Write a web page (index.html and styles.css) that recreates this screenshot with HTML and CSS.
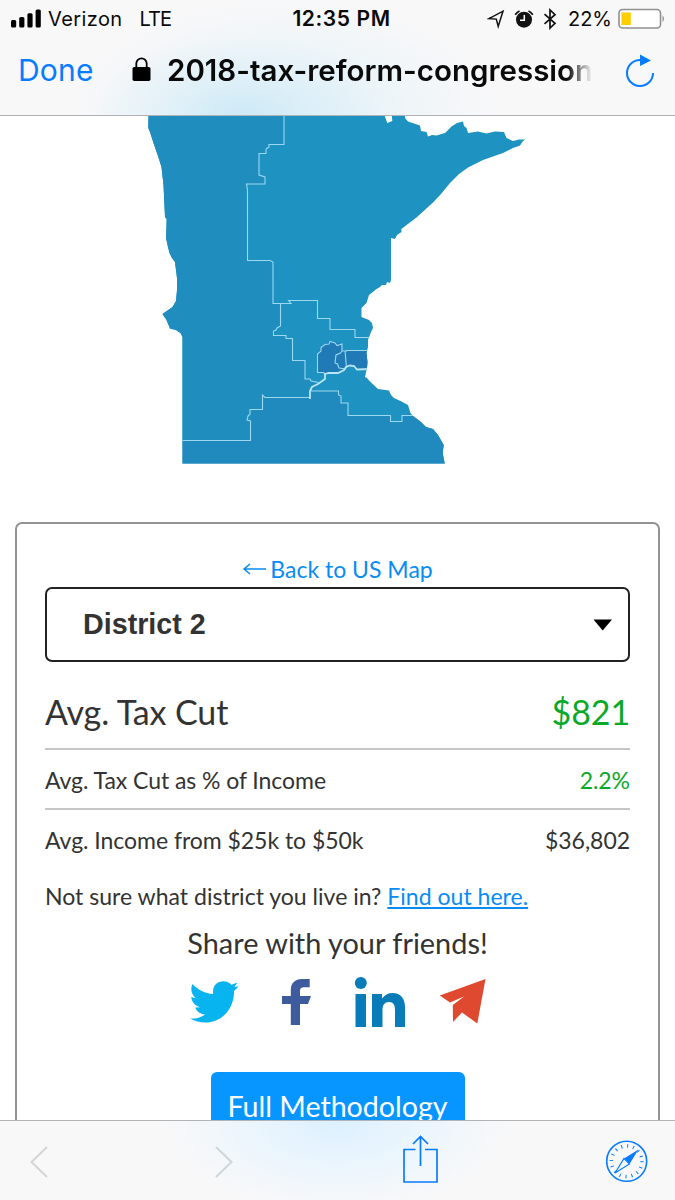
FILE: index.html
```
<!DOCTYPE html>
<html lang="en">
<head>
<meta charset="utf-8">
<title>2018 Tax Reform</title>
<link rel="stylesheet" href="styles.css">
</head>
<body>
<div class="phone">
  <header class="topbar">
    <div class="status">
      <div class="status-left">
        <svg class="signal" width="31" height="19" viewBox="0 0 31 19"><rect x="0" y="11" width="5.2" height="7.5" rx="1.5"/><rect x="8.2" y="8" width="5.2" height="10.5" rx="1.5"/><rect x="16.4" y="4.2" width="5.2" height="14.3" rx="1.5"/><rect x="24.6" y="0.5" width="5.2" height="18" rx="1.5"/></svg>
        <span class="carrier">Verizon</span><span class="network">LTE</span>
      </div>
      <div class="clock">12:35 PM</div>
      <div class="status-right">
        <svg width="18" height="20" viewBox="0 0 18 20"><path d="M2 9.6 16 2.2 11.2 17.4 9.3 10.1Z" fill="none" stroke="#111" stroke-width="1.5"/></svg>
        <svg class="alarm" width="20" height="20" viewBox="0 0 20 20"><circle cx="10" cy="10.7" r="8" fill="#111"/><path d="M1.2 5.7A11 11 0 0 1 5.5 2M18.8 5.7A11 11 0 0 0 14.500 2" fill="none" stroke="#111" stroke-width="1.8"/><path d="M10.300 6v5.200H6" fill="none" stroke="#fff" stroke-width="1.5"/></svg>
        <svg class="bluetooth" width="14" height="22" viewBox="0 0 14 22"><path d="M1.500 6.200 12 15.300 7 20V2l5 4.700L1.500 15.800" fill="none" stroke="#111" stroke-width="1.7"/></svg>
        <span class="percent">22%</span>
        <svg class="battery" width="48" height="22" viewBox="0 0 48 22"><rect x="1" y="1.500" width="41.500" height="18.500" rx="3.500" fill="#fff" stroke="#909092" stroke-width="1.600"/><rect x="3.500" y="4.500" width="9.300" height="12.500" fill="#fc0"/><path d="M44.500 7.300q3 3.500 0 7z" fill="#909092"/></svg>
      </div>
    </div>
    <div class="addressbar">
      <span class="done">Done</span>
      <svg class="lock" width="20" height="26" viewBox="0 0 20 26"><path d="M4.300 12V7.500a5.200 5.200 0 0 1 10.400 0V12" fill="none" stroke="#000" stroke-width="1.800"/><rect x="0.500" y="11" width="18" height="14" rx="1.800"/></svg>
      <span class="address">2018-tax-reform-congression</span>
      <svg class="reload" width="30" height="34" viewBox="0 0 30 34"><path d="M15.500 6A13 13 0 1 0 28 19" fill="none" stroke="#087cff" stroke-width="2"/><path d="M15 0.500 26 6.500 15 12Z" fill="#087cff"/></svg>
    </div>
  </header>

  <main class="page">
    <svg class="map" width="675" height="406" viewBox="0 116 675 406">
      <defs>
        <clipPath id="state"><path d="M148.500 114 148.300 128 150 132 153.500 143 158 156 161.500 167 163.500 185 165 217 166.700 219 166 238 168 247 169.500 253 172 258 175 262 177 278 177 290 176 301 172.500 307 162.500 314 166.500 320 170 328.500 176 330 180.500 333 182.500 337V463.500H444.700L442.700 453 443.700 445 438 435 433 429 426 427 421 422 413 416 410.500 413 408 405 401.500 401.500 394 398 391 395 389 390.500 378 389 370 381.500 367 378 365 377 367 368 367.500 362 366.500 353 368 347 368 340 371 332 373 328 372 323 369 320 361.500 317 361.500 308 366.500 303 369 295 376.500 289 380 287 382 285 386 285 387 282 390 283 391 280V238L395 239 397 235 401.500 232 401.300 229 416.500 217.500 433 202.500 441 194 450 183 459 174 468 167.500 483 160 503 153 513 148 520 145.500 523 141 525.500 139.500 519 139.500 513 141 506.500 138 504 132 495 131.500 486.500 133.500 478 131.500 468 133 466.500 128 464 126 463 121.500 457 123 451.500 126.500 445 133 436.500 135.500 432 135 428 136.500 426.500 132 421 131 420 125.500 408 121.500 405 118 405 114H391.700L392.300 121 387.300 123 384 114Z"/></clipPath>
      </defs>
      <g clip-path="url(#state)">
        <rect x="140" y="110" width="400" height="360" fill="#1e92c1"/>
        <path fill="#1f8dbe" d="M140 110H284V145H269L265 154H259V175L265 177V184H246L248 260H272L273 303H280L280 326L273 335L286 338L293 342V360H305V379L319 384L310 397H265L262 409L250 413V440H140Z"/>
        <path fill="#2089bd" d="M140 440H251V413L262 409L265 397H310V391H339L341 400L348 404V415H390V421H402V416H460V470H140Z"/>
        <path fill="#207ab6" d="M317.500 372.500V354L320 350 324 345 330 341 341 344V350H372V369H357L350 365 344 370 336 373 326 373Z"/>
        <g class="borders">
          <path d="M284 110.500V144.500H269V147L266 149V153.500H259V175L265 177V184H246.500L247.500 190V260.500H270L273 262V303.500H291L288.500 300.500H317.500V318.500H330V329.500H355V337.500H372"/>
          <path d="M280.500 303.500V326L277 328 276 330 273.500 331V335.500H286V338.500H292.500V360.500H305V379H310L311 381 318.500 382.500"/>
          <path d="M182 440.500H250.500V421L247 420 248 416 250 414V409.500H262.500V395L265 397.500H310"/>
          <path d="M310 391H338.500V395L341 396V403H348V415.500H390.500V421.500H402V415.500H415"/>
          <path d="M325 374 323.500 372.500H317.500V354L321 351V347.500L325 344.500 329 344 330 341.500 335 343 337 345.500 342 344V351H347M342 351 340.500 353 336 355 335 363 337.500 364 339 368 346 369M345 350.500 346.500 368"/>
          <path d="M346 350.500H372"/>
          <path class="river" d="M310 399V391L312 387 318 384 325 379V374L329 373 338 373 344 370 346 367 350 365.500 354 366 357 369.500 370 369"/>
        </g>
      </g>
    </svg>

    <section class="card">
      <a class="back"><svg width="24" height="16" viewBox="0 0 24 16"><path d="M24 8H2M8 3 2 8l6 5" fill="none" stroke="currentColor" stroke-width="1.500"/></svg><span>Back to US Map</span></a>
      <div class="select"><span>District 2</span><svg width="20" height="12" viewBox="0 0 20 12"><path d="M0.500 0.500H19L9.700 11.500Z"/></svg></div>
      <div class="row row-large"><span>Avg. Tax Cut</span><span class="green">$821</span></div>
      <div class="row row-share"><span>Avg. Tax Cut as % of Income</span><span class="green">2.2%</span></div>
      <div class="row row-last"><span>Avg. Income from $25k to $50k</span><span>$36,802</span></div>
      <p class="lookup">Not sure what district you live in? <a>Find out here.</a></p>
      <p class="share-title">Share with your friends!</p>
      <div class="social">
        <svg width="50" height="60" viewBox="190 970 50 60"><path fill="#08b4f0" d="M190.300 1018.500C196 1019 201 1017.500 205 1014.500 200 1014 196.500 1011.500 195.300 1007.500L200 1007.300C194.500 1005.500 191.500 1001.500 191.300 997L195.800 998.200C191.500 995 190 989 192.500 984 198 990 205 993.500 213.200 994 212 986 217 981.200 223.500 981.200 227 981.200 229 982.500 231.500 984.700L237.500 982.500 234.300 987 238.800 986.200 234 991C234.500 1008 222.500 1022.500 205.500 1022.500 200 1022.500 194.500 1021 190.300 1018.500Z"/></svg>
        <svg width="30" height="60" viewBox="282 970 30 60"><path fill="#3d5b9d" d="M290.800 1025V1004H282V996H290.800V990C290.800 983 295 979 302 979H309.700V987.300H304C301 987.300 300 988.500 300 991V996H311L308 1004H300V1025Z"/></svg>
        <svg width="52" height="60" viewBox="354 970 52 60"><g fill="#087cb9"><circle cx="360.800" cy="983" r="6"/><path d="M355.500 994H366V1027H355.500ZM372 994H382V998.500C384.500 995 388 993 392.500 993 401 993 405 999 405 1007V1027H395V1010C395 1005 393.500 1002 389 1002 384.500 1002 382.500 1005 382.500 1010V1027H372Z"/></g></svg>
        <svg width="47" height="60" viewBox="439 970 47 60"><path fill="#df4930" d="M439.800 995.500 485.500 979 477.300 1023.500 462 1012.500 453 1022 452.800 1005 464 996.500 450 1002.500Z"/></svg>
      </div>
      <a class="method">Full Methodology</a>
    </section>
  </main>

  <footer class="toolbar">
    <svg width="18" height="34" viewBox="30 1145 18 34"><path d="M47 1147 31.500 1162 47 1177" fill="none" stroke="#d3d5d7" stroke-width="2"/></svg>
    <svg width="18" height="34" viewBox="215 1145 18 34"><path d="M216 1147 231.500 1162 216 1177" fill="none" stroke="#cfd6db" stroke-width="2"/></svg>
    <svg class="share" width="36" height="48" viewBox="402 1134 36 48"><path d="M415.500 1148.500H404V1181H437V1148.500H425M420.500 1165V1136M413 1143 420.500 1135.500 428 1143" fill="none" stroke="#087cff" stroke-width="1.700"/></svg>
    <svg width="42" height="44" viewBox="606 1140 42 44"><g fill="none" stroke="#087cff"><circle cx="626.700" cy="1161.300" r="20" stroke-width="1.600"/><circle cx="626.700" cy="1161.300" r="15.300" stroke-width="3.500" stroke-dasharray="1 5.009"/></g><path fill="#087cff" d="M638.500 1149.500 629.500 1164 624 1158.500Z"/><path fill="#f7f8f9" stroke="#087cff" stroke-width="1.200" d="M615 1173 624 1158.500 629.500 1164Z"/></svg>
  </footer>
</div>
</body>
</html>
```

FILE: styles.css
```
* { box-sizing: border-box; }
body { margin: 0; background: #fff; }
svg { display: block; flex: none; }
.phone { width: 675px; height: 1200px; display: flex; flex-direction: column; overflow: hidden; font-family: Lato, sans-serif; color: #333; }
.topbar { flex: none; height: 116px; border-bottom: 1px solid #b0b2b5; font-family: Inter, sans-serif; color: #0a0a0a;
  background: radial-gradient(ellipse 150px 80px at 240px 116px, rgba(200,232,246,.85) 0%, rgba(212,236,247,.5) 45%, rgba(247,248,249,0) 100%), radial-gradient(ellipse 210px 110px at 285px 110px, #e2f1f8 0%, rgba(247,248,249,0) 100%), #f8f8f9; }
.status { display: grid; grid-template-columns: 1fr auto 1fr; align-items: center; height: 37px; padding: 0 9px 0 11px; font-size: 20px; }
.status-left, .status-right { display: flex; align-items: center; }
.status-right { justify-content: flex-end; }
.carrier { margin-left: 6px; letter-spacing: .4px; }
.network { margin-left: 17px; letter-spacing: -.9px; }
.clock { font-weight: 600; font-size: 21px; letter-spacing: .6px; padding-left: 6px; }
.alarm { margin-left: 9px; }
.bluetooth { margin-left: 9px; }
.percent { margin-left: 11px; }
.battery { margin-left: 6px; }
.addressbar { display: flex; align-items: center; height: 67px; padding-left: 18px; }
.done { width: 114px; color: #087cff; font-size: 30px; letter-spacing: .2px; margin-top: -1px; }
.lock { margin-top: -4px; }
.address { margin-top: -2px; margin-left: 15px; width: 425px; white-space: nowrap; overflow: hidden; font-size: 29.5px; font-weight: 600; -webkit-mask-image: linear-gradient(90deg, #000 400px, transparent 425px); mask-image: linear-gradient(90deg, #000 400px, transparent 425px); }
.reload { margin-left: 33px; }
.page { flex: 1; min-height: 0; overflow: hidden; }
.borders path { fill: none; stroke: #9cd8f2; stroke-width: 1.1; }
.borders .river { stroke: #b9e6f7; stroke-width: 1.8; }
.card { margin: 0 15px; height: 700px; border: 2px solid #929292; border-radius: 7px; padding: 31px 28px 0; display: flex; flex-direction: column; }
.back { display: flex; align-items: center; justify-content: center; gap: 4px; height: 32px; padding-bottom: 5px; color: #078cf5; font-size: 23px; }
.select { display: flex; align-items: center; justify-content: space-between; height: 75px; border: 2px solid #222; border-radius: 7px; padding: 0 15px 0 36px; font: bold 28.7px "Liberation Sans", sans-serif; }
.row { display: flex; align-items: center; justify-content: space-between; height: 59px; font-size: 23px; border-bottom: 2px solid #c6c6c6; padding-top: 1px; }
.row-large { height: 88px; font-size: 34px; padding-top: 13px; letter-spacing: -.1px; }
.row-share { letter-spacing: -.06px; height: 60px; }
.row-last { border: 0; letter-spacing: -.04px; padding-top: 0; }
.green { color: #08a929; }
.lookup { margin: 0; height: 54px; padding-top: 13px; font-size: 23.05px; line-height: 29px; white-space: nowrap; }
.lookup a { color: #078cf5; text-decoration: underline; }
.share-title { margin: 0; height: 43px; text-align: center; font-size: 28.9px; line-height: 39px; }
.social { display: flex; height: 60px; margin-top: 4px; padding-left: 144.5px; }
.social svg + svg { margin-left: 42px; }
.social svg:nth-child(4) { margin-left: 33px; }
.method { align-self: center; flex: none; width: 254px; height: 70px; margin-top: 42px; border-radius: 6px; background: #0796ff; color: #fff; font-size: 28.6px; line-height: 69px; text-align: center; }
.toolbar { flex: none; height: 80px; border-top: 1px solid #b1b4b7; display: grid; grid-template-columns: 185px 187px 204px 42px; padding: 2px 0 0 30px; align-items: center;
  background: radial-gradient(ellipse 170px 90px at 337px 0, #dcf0ff 0%, rgba(228,244,255,.65) 50%, rgba(247,248,249,0) 100%), #f8f8f9; }
.share { margin-top: -6px; }
```
